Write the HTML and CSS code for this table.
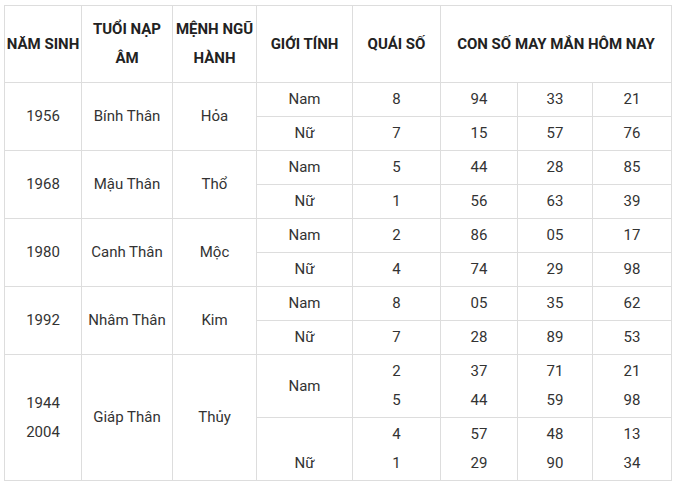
FILE: index.html
```html
<!DOCTYPE html>
<html lang="vi">
<head>
<meta charset="utf-8">
<link rel="stylesheet" href="styles.css">
</head>
<body>
<table class="lucky">
  <colgroup>
    <col class="c1"><col class="c2"><col class="c3"><col class="c4"><col class="c5"><col class="c6"><col class="c7"><col class="c8">
  </colgroup>
  <thead>
    <tr>
      <th class="nowrap">NĂM SINH</th>
      <th>TUỔI NẠP ÂM</th>
      <th>MỆNH NGŨ HÀNH</th>
      <th>GIỚI TÍNH</th>
      <th>QUÁI SỐ</th>
      <th colspan="3">CON SỐ MAY MẮN HÔM NAY</th>
    </tr>
  </thead>
  <tbody>
    <tr><td rowspan="2">1956</td><td rowspan="2">Bính Thân</td><td rowspan="2">Hỏa</td><td>Nam</td><td>8</td><td>94</td><td>33</td><td>21</td></tr>
    <tr><td>Nữ</td><td>7</td><td>15</td><td>57</td><td>76</td></tr>
    <tr><td rowspan="2">1968</td><td rowspan="2">Mậu Thân</td><td rowspan="2">Thổ</td><td>Nam</td><td>5</td><td>44</td><td>28</td><td>85</td></tr>
    <tr><td>Nữ</td><td>1</td><td>56</td><td>63</td><td>39</td></tr>
    <tr><td rowspan="2">1980</td><td rowspan="2">Canh Thân</td><td rowspan="2">Mộc</td><td>Nam</td><td>2</td><td>86</td><td>05</td><td>17</td></tr>
    <tr><td>Nữ</td><td>4</td><td>74</td><td>29</td><td>98</td></tr>
    <tr><td rowspan="2">1992</td><td rowspan="2">Nhâm Thân</td><td rowspan="2">Kim</td><td>Nam</td><td>8</td><td>05</td><td>35</td><td>62</td></tr>
    <tr><td>Nữ</td><td>7</td><td>28</td><td>89</td><td>53</td></tr>
    <tr><td rowspan="2">1944<br>2004</td><td rowspan="2">Giáp Thân</td><td rowspan="2">Thủy</td><td>Nam</td><td>2<br>5</td><td>37<br>44</td><td>71<br>59</td><td>21<br>98</td></tr>
    <tr><td><br>Nữ</td><td>4<br>1</td><td>57<br>29</td><td>48<br>90</td><td>13<br>34</td></tr>
  </tbody>
</table>
</body>
</html>
```

FILE: styles.css
```css
html, body {
  margin: 0;
  padding: 0;
  background: #fff;
}
body {
  padding: 5px 0 0 4px;
  font-family: Roboto, "Liberation Sans", Arial, sans-serif;
  font-size: 15px;
  color: #333;
}
.lucky {
  border-collapse: collapse;
  table-layout: fixed;
  width: 667px;
}
.c1 { width: 77px; }
.c2 { width: 91px; }
.c3 { width: 84px; }
.c4 { width: 96px; }
.c5 { width: 88px; }
.c6 { width: 77px; }
.c7 { width: 75px; }
.c8 { width: 79px; }
.lucky th, .lucky td {
  border: 1px solid #ddd;
  text-align: center;
  vertical-align: middle;
  line-height: 29px;
}
.lucky th {
  padding: 9px 0;
  font-weight: 700;
  color: #222;
  line-height: 29px;
}
.lucky th.nowrap {
  white-space: nowrap;
}
.lucky td {
  padding: 2px 2px;
  font-weight: 400;
}
```
